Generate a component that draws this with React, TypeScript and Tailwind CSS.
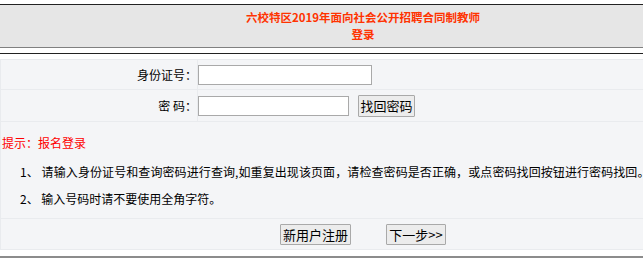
export default function App() {
  return (
    <div className="w-[643px] h-[259px] overflow-hidden bg-white">
      <div className="w-[726px] pt-[4px] text-[12px] leading-[20px] text-black font-['Noto_Sans_CJK_SC',sans-serif]">
        <div className="h-[44px] border-t border-t-[#222] border-b border-b-[#808080] bg-[#e6e6e6] flex flex-col items-center justify-center text-[11.5px] font-bold leading-[17px] text-[#ff3300]">
          <div>六校特区2019年面向社会公开招聘合同制教师</div>
          <div>登录</div>
        </div>
        <div className="mt-[5px] h-[1px] bg-[#222]" />
        <div className="mt-[5px] bg-[#e9ebee] p-[1px] flex flex-col gap-[1px]">
          <div className="flex gap-[1px] h-[29px]">
            <div className="w-[196px] bg-[#f4f5f7] flex items-center justify-end">身份证号：</div>
            <div className="flex-1 bg-[#f4f5f7] flex items-center">
              <div className="w-[174px] h-[20px] border border-[#a9a9a9] bg-white" />
            </div>
          </div>
          <div className="flex gap-[1px] h-[31px]">
            <div className="w-[196px] bg-[#f4f5f7] flex items-center justify-end">密 码：</div>
            <div className="flex-1 bg-[#f4f5f7] flex items-center">
              <div className="w-[151px] h-[20px] border border-[#a9a9a9] bg-white" />
              <button className="ml-[9px] w-[57px] h-[22px] border border-[#a9a9a9] bg-[#ececec] rounded-[1px] text-[13px] leading-[20px] text-black flex items-center justify-center">
                找回密码
              </button>
            </div>
          </div>
          <div className="h-[96px] bg-[#f4f5f7] pt-[11px] pl-[1px]">
            <div className="text-[#ff0000]">提示：报名登录</div>
            <div className="mt-[9px] pl-[18px] whitespace-nowrap tracking-[0.09px]">1、 请输入身份证号和查询密码进行查询,如重复出现该页面，请检查密码是否正确，或点密码找回按钮进行密码找回。</div>
            <div className="mt-[7px] pl-[18px] whitespace-nowrap">2、 输入号码时请不要使用全角字符。</div>
          </div>
          <div className="h-[30px] bg-[#f4f5f7] flex items-center justify-center gap-[35px]">
            <button className="w-[71px] h-[21px] border border-[#a9a9a9] bg-[#ececec] rounded-[1px] text-[13px] leading-[19px] text-black flex items-center justify-center">
              新用户注册
            </button>
            <button className="w-[60px] h-[21px] border border-[#a9a9a9] bg-[#ececec] rounded-[1px] text-[13px] leading-[19px] text-black flex items-center justify-center">
              下一步&gt;&gt;
            </button>
          </div>
        </div>
        <div className="mt-[6px] h-[2px] bg-[#8c8c8c]" />
      </div>
    </div>
  );
}
